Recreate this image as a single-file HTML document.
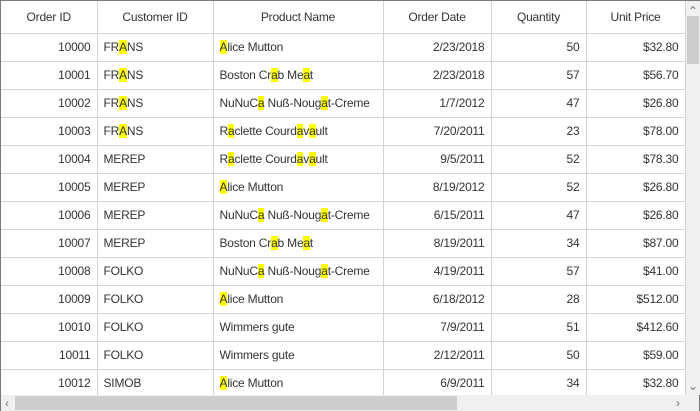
<!DOCTYPE html>
<html><head><style>
*{margin:0;padding:0;box-sizing:border-box}
body{width:700px;height:411px;overflow:hidden;background:#fff;font-family:"Liberation Sans",sans-serif;font-size:12px;color:#333}
.wrap{position:absolute;left:0;top:0;width:700px;height:411px;border:1px solid #7a7a7a}
table{position:absolute;left:0;top:0;border-collapse:collapse;table-layout:fixed;letter-spacing:-0.2px}
td,th{border-right:1px solid #d3d3d3;border-bottom:1px solid #d3d3d3;height:28px;white-space:nowrap;overflow:hidden;padding:0 6px}
th{height:32px;font-weight:normal;text-align:center;color:#333}
td.r{text-align:right}
b{font-weight:normal;background:#ffff00}
.vs{position:absolute;left:685px;top:0;width:14px;height:394px;background:#f0f0f0}
.vt{position:absolute;left:686px;top:15px;width:12px;height:48px;background:#cdcdcd}
.hs{position:absolute;left:0;top:394px;width:698px;height:16px;background:#f0f0f0}
.ht{position:absolute;left:14px;top:395px;width:442px;height:14px;background:#cdcdcd}
.ar{position:absolute;color:#777;font-size:12px}
</style></head><body><div class="wrap">
<table>
<colgroup><col style="width:96px"><col style="width:116px"><col style="width:170px"><col style="width:108px"><col style="width:95px"><col style="width:99px"></colgroup>
<tr><th>Order ID</th><th>Customer ID</th><th>Product Name</th><th>Order Date</th><th>Quantity</th><th>Unit Price</th></tr>
<tr><td class="r">10000</td><td>FR<b>A</b>NS</td><td><b>A</b>lice Mutton</td><td class="r">2/23/2018</td><td class="r">50</td><td class="r">$32.80</td></tr>
<tr><td class="r">10001</td><td>FR<b>A</b>NS</td><td>Boston Cr<b>a</b>b Me<b>a</b>t</td><td class="r">2/23/2018</td><td class="r">57</td><td class="r">$56.70</td></tr>
<tr><td class="r">10002</td><td>FR<b>A</b>NS</td><td>NuNuC<b>a</b> Nuß-Noug<b>a</b>t-Creme</td><td class="r">1/7/2012</td><td class="r">47</td><td class="r">$26.80</td></tr>
<tr><td class="r">10003</td><td>FR<b>A</b>NS</td><td>R<b>a</b>clette Courd<b>a</b>v<b>a</b>ult</td><td class="r">7/20/2011</td><td class="r">23</td><td class="r">$78.00</td></tr>
<tr><td class="r">10004</td><td>MEREP</td><td>R<b>a</b>clette Courd<b>a</b>v<b>a</b>ult</td><td class="r">9/5/2011</td><td class="r">52</td><td class="r">$78.30</td></tr>
<tr><td class="r">10005</td><td>MEREP</td><td><b>A</b>lice Mutton</td><td class="r">8/19/2012</td><td class="r">52</td><td class="r">$26.80</td></tr>
<tr><td class="r">10006</td><td>MEREP</td><td>NuNuC<b>a</b> Nuß-Noug<b>a</b>t-Creme</td><td class="r">6/15/2011</td><td class="r">47</td><td class="r">$26.80</td></tr>
<tr><td class="r">10007</td><td>MEREP</td><td>Boston Cr<b>a</b>b Me<b>a</b>t</td><td class="r">8/19/2011</td><td class="r">34</td><td class="r">$87.00</td></tr>
<tr><td class="r">10008</td><td>FOLKO</td><td>NuNuC<b>a</b> Nuß-Noug<b>a</b>t-Creme</td><td class="r">4/19/2011</td><td class="r">57</td><td class="r">$41.00</td></tr>
<tr><td class="r">10009</td><td>FOLKO</td><td><b>A</b>lice Mutton</td><td class="r">6/18/2012</td><td class="r">28</td><td class="r">$512.00</td></tr>
<tr><td class="r">10010</td><td>FOLKO</td><td>Wimmers gute</td><td class="r">7/9/2011</td><td class="r">51</td><td class="r">$412.60</td></tr>
<tr><td class="r">10011</td><td>FOLKO</td><td>Wimmers gute</td><td class="r">2/12/2011</td><td class="r">50</td><td class="r">$59.00</td></tr>
<tr><td class="r">10012</td><td>SIMOB</td><td><b>A</b>lice Mutton</td><td class="r">6/9/2011</td><td class="r">34</td><td class="r">$32.80</td></tr>
</table>
<div class="vs"></div><div class="vt"></div>
<div class="hs"></div><div class="ht"></div>
<div class="ar" style="left:687px;top:3px">&#8963;</div>
<div class="ar" style="left:687px;top:378px">&#8964;</div>
<div class="ar" style="left:4px;top:395px">&lsaquo;</div>
<div class="ar" style="left:675px;top:395px">&rsaquo;</div>
</div></body></html>
